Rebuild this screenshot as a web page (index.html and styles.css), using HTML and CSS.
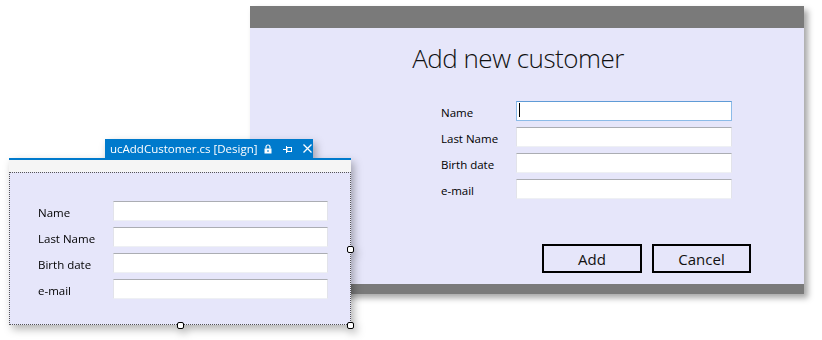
FILE: index.html
```html
<!DOCTYPE html>
<html lang="en">
<head>
    <meta charset="UTF-8">
    <meta name="viewport" content="width=device-width, initial-scale=1.0">
    <title>Add new customer</title>
    <link rel="stylesheet" href="styles.css">
</head>
<body>
    <div class="desk">
        <!-- running form -->
        <div class="window main-window">
            <div class="titlebar"></div>
            <div class="window-body">
                <h1 class="form-title">Add new customer</h1>
                <div class="fields">
                    <label>Name</label>
                    <div class="textbox focused"><span class="caret"></span></div>
                    <label>Last Name</label>
                    <div class="textbox"></div>
                    <label>Birth date</label>
                    <div class="textbox"></div>
                    <label>e-mail</label>
                    <div class="textbox"></div>
                </div>
                <div class="buttons">
                    <button class="btn btn-add">Add</button>
                    <button class="btn btn-cancel">Cancel</button>
                </div>
            </div>
            <div class="statusbar"></div>
        </div>

        <!-- designer view -->
        <div class="window designer">
            <div class="doc-tab">
                <span class="doc-name">ucAddCustomer.cs [Design]</span>
                <svg class="tab-icon" width="8" height="10" viewBox="0 0 8 10">
                    <path d="M2 4.5V3a2 2 0 0 1 4 0v1.5" fill="none" stroke="#fff" stroke-width="1.2"/>
                    <rect x="0.5" y="4.5" width="7" height="5" fill="#fff"/>
                    <rect x="3.5" y="6" width="1" height="2" fill="#007acc"/>
                </svg>
                <svg class="tab-icon" width="9" height="8" viewBox="0 0 9 8">
                    <path d="M0 4.5h3.5M3.5 1v7" fill="none" stroke="#fff" stroke-width="1"/>
                    <rect x="4" y="2.5" width="4.5" height="4" fill="none" stroke="#fff" stroke-width="1"/>
                </svg>
                <svg class="tab-icon close" width="9" height="9" viewBox="0 0 9 9">
                    <path d="M0.5 0.5l8 8M8.5 0.5l-8 8" fill="none" stroke="#fff" stroke-width="1.3"/>
                </svg>
            </div>
            <div class="doc-rule"></div>
            <div class="designer-strip"></div>
            <div class="surface">
                <div class="fields small-fields">
                    <label>Name</label>
                    <div class="textbox"></div>
                    <label>Last Name</label>
                    <div class="textbox"></div>
                    <label>Birth date</label>
                    <div class="textbox"></div>
                    <label>e-mail</label>
                    <div class="textbox"></div>
                </div>
                <span class="handle handle-right"></span>
                <span class="handle handle-bottom"></span>
                <span class="handle handle-corner"></span>
            </div>
        </div>
    </div>
</body>
</html>
```

FILE: styles.css
```css
body {
    margin: 0;
    background-color: #fff;
    font-family: "Open Sans", "Noto Sans", sans-serif;
    color: #111;
}
.desk {
    position: relative;
    width: 822px;
    height: 340px;
    overflow: hidden;
}
.window {
    position: absolute;
}

/* running form */
.main-window {
    left: 250px;
    top: 6px;
    width: 554px;
    height: 288px;
    display: flex;
    flex-direction: column;
    background-color: #e6e6fa;
    box-shadow: 4px 4px 6px rgba(0, 0, 0, 0.35);
}
.titlebar {
    height: 22px;
    background-color: #7a7a7a;
}
.window-body {
    flex: 1;
    padding-top: 12px;
}
.statusbar {
    height: 10px;
    background-color: #7a7a7a;
}
.form-title {
    margin: 0;
    padding-right: 18px;
    font-size: 26px;
    font-weight: 300;
    letter-spacing: -0.5px;
    line-height: 36px;
    text-align: center;
    color: #111;
}
.fields {
    display: grid;
    grid-template-columns: 75px 216px;
    grid-auto-rows: 20px;
    row-gap: 6px;
    margin: 25px 0 0 191px;
}
.fields label {
    font-size: 11.5px;
    line-height: 16px;
    padding-top: 4px;
    color: #000;
}
.textbox {
    position: relative;
    background-color: #fff;
    border: 1px solid #e2e3ea;
    border-top-color: #abadb3;
    border-bottom-color: #eef0f4;
}
.textbox.focused {
    border-color: #8cbbe8;
    border-top-color: #5f9bd6;
}
.caret {
    position: absolute;
    left: 2px;
    top: 1px;
    width: 1px;
    height: 14px;
    background-color: #000;
}
.buttons {
    display: flex;
    gap: 10px;
    margin: 45px 0 0 292px;
}
.btn {
    height: 29px;
    padding: 0;
    border: 2px solid #000;
    background-color: transparent;
    font-family: inherit;
    font-size: 15px;
    color: #111;
}
.btn-add {
    width: 100px;
}
.btn-cancel {
    width: 99px;
}

/* designer view */
.designer {
    left: 9px;
    top: 139px;
    width: 342px;
    filter: drop-shadow(3px 4px 4px rgba(0, 0, 0, 0.3));
}
.doc-tab {
    display: flex;
    align-items: center;
    width: 208px;
    height: 19px;
    margin-left: 96px;
    padding-left: 5px;
    box-sizing: border-box;
    background-color: #007acc;
    color: #fff;
}
.doc-name {
    flex-shrink: 0;
    white-space: nowrap;
    font-size: 11.5px;
    line-height: 19px;
    margin-right: 6px;
}
.tab-icon {
    flex-shrink: 0;
    margin-right: 11px;
}
.tab-icon.close {
    margin-right: 0;
}
.doc-rule {
    height: 2px;
    background-color: #007acc;
}
.designer-strip {
    height: 12px;
    background-color: #f5f5f5;
}
.surface {
    position: relative;
    height: 153px;
    box-sizing: border-box;
    border: 1px dotted #555;
    background-color: #e6e6fa;
    padding-top: 28px;
}
.small-fields {
    grid-template-columns: 75px 215px;
    margin: 0 0 0 28px;
}
.handle {
    position: absolute;
    width: 5px;
    height: 5px;
    border: 1px solid #000;
    border-radius: 2px;
    background-color: #fff;
}
.handle-right {
    left: 337px;
    top: 73px;
}
.handle-bottom {
    left: 167px;
    top: 149px;
}
.handle-corner {
    left: 337px;
    top: 149px;
}
```
